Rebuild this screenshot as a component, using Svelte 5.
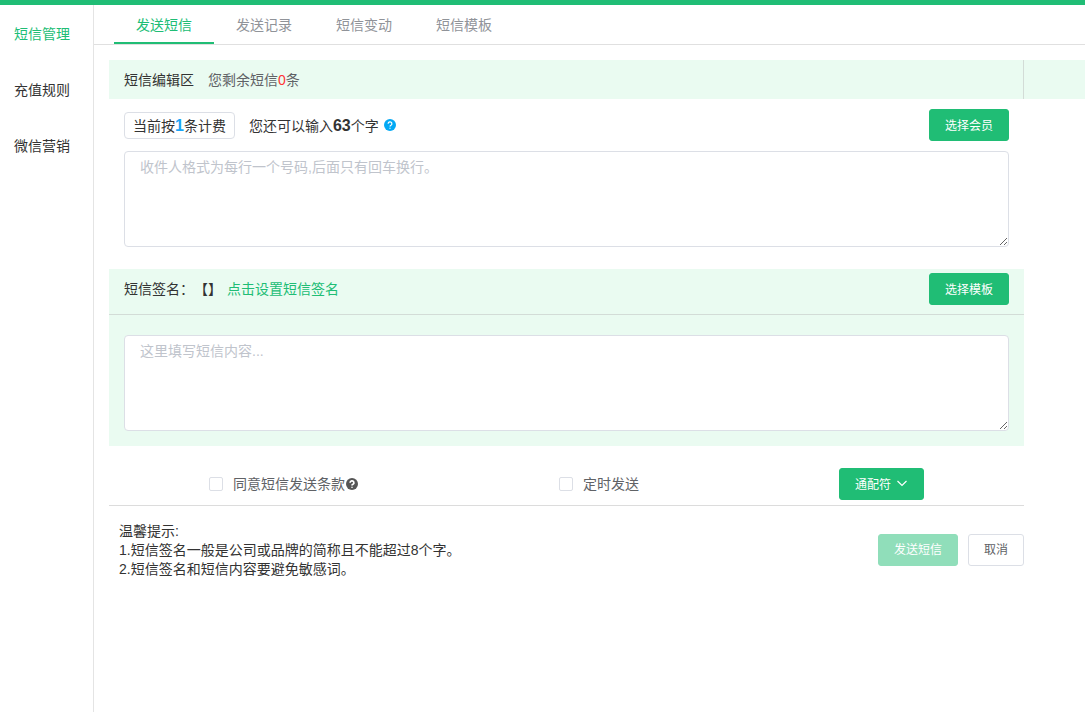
<script>
	const menu = ['短信管理', '充值规则', '微信营销'];
	const tabs = ['发送短信', '发送记录', '短信变动', '短信模板'];

	let activeMenu = 0;
	let activeTab = 0;
	let receivers = '';
	let content = '';
	let agree = false;
	let timed = false;

	function reset() {
		receivers = '';
		content = '';
		agree = false;
		timed = false;
	}
</script>

<div class="page">
	<nav class="sidebar">
		{#each menu as item, i}
			<a href="#menu-{i}" class:active={i === activeMenu} on:click|preventDefault={() => (activeMenu = i)}>{item}</a>
		{/each}
	</nav>

	<main>
		<div class="tabs" role="tablist">
			{#each tabs as tab, i}
				<button role="tab" aria-selected={i === activeTab} class:active={i === activeTab} on:click={() => (activeTab = i)}>{tab}</button>
			{/each}
		</div>

		<form on:submit|preventDefault>
			<header>
				<div class="title">
					<label for="receivers">短信编辑区</label>
					<span class="remain">您剩余短信<span class="red">0</span>条</span>
				</div>
				<div class="side"></div>
			</header>

			<div class="body">
				<section class="receivers">
					<div class="row">
						<span class="fee">当前按<b>1</b>条计费</span>
						<span>您还可以输入<b>63</b>个字</span>
						<svg class="help blue" viewBox="0 0 14 14">
							<circle cx="7" cy="7" r="7" />
							<path d="M4.8 5.5a2.2 2.2 0 1 1 3.3 1.9C7.3 7.8 7 8 7 8.8M7 10.2v1.2" />
						</svg>
						<button type="button" class="btn primary right">选择会员</button>
					</div>
					<textarea id="receivers" bind:value={receivers} placeholder="收件人格式为每行一个号码,后面只有回车换行。"></textarea>
				</section>

				<section class="message">
					<div class="sign">
						<label for="content">短信签名：【】</label>
						<a href="#sign">点击设置短信签名</a>
						<button type="button" class="btn primary right">选择模板</button>
					</div>
					<div class="content">
						<textarea id="content" bind:value={content} placeholder="这里填写短信内容..."></textarea>
					</div>
				</section>

				<div class="options">
					<div class="check">
						<input type="checkbox" id="agree" bind:checked={agree} />
						<label for="agree">同意短信发送条款</label>
						<svg class="help dark" viewBox="0 0 14 14">
							<circle cx="7" cy="7" r="7" />
							<path d="M4.8 5.5a2.2 2.2 0 1 1 3.3 1.9C7.3 7.8 7 8 7 8.8M7 10.2v1.2" />
						</svg>
					</div>
					<div class="check">
						<input type="checkbox" id="timed" bind:checked={timed} />
						<label for="timed">定时发送</label>
					</div>
					<button type="button" class="btn primary">
						通配符
						<svg class="arrow" viewBox="0 0 12 12"><path d="M1.5 4 6 8.5 10.5 4" /></svg>
					</button>
				</div>

				<footer>
					<div class="tips">
						<p>温馨提示:</p>
						<p>1.短信签名一般是公司或品牌的简称且不能超过8个字。</p>
						<p>2.短信签名和短信内容要避免敏感词。</p>
					</div>
					<button class="btn primary" disabled={!agree}>发送短信</button>
					<button type="button" class="btn" on:click={reset}>取消</button>
				</footer>
			</div>
		</form>
	</main>
</div>

<style>
	:global(body) {
		background: #fff;
	}

	.page {
		display: flex;
		box-sizing: border-box;
		min-height: 100vh;
		border-top: 5px solid #20bd75;
		font: 14px/20px "Liberation Sans", Arial, "Noto Sans CJK SC", sans-serif;
		text-spacing-trim: space-all;
		color: #333;
	}

	a {
		color: #20bd75;
		text-decoration: none;
	}

	button,
	textarea {
		font-family: inherit;
	}

	.sidebar {
		flex: none;
		width: 93px;
		padding-top: 1px;
		border-right: 1px solid #e4e4e4;
	}

	.sidebar a {
		display: block;
		padding-left: 14px;
		line-height: 56px;
		color: #333;
	}

	.sidebar a.active {
		color: #20bd75;
	}

	main {
		flex: 1;
		min-width: 0;
	}

	.tabs {
		display: flex;
		padding-left: 20px;
		border-bottom: 1px solid #e0e0e0;
	}

	.tabs button {
		width: 100px;
		height: 39px;
		padding: 0;
		border: 0;
		border-bottom: 2px solid transparent;
		background: none;
		font-size: 14px;
		color: #909399;
		cursor: pointer;
	}

	.tabs button.active {
		color: #20bd75;
		border-color: #20bd75;
	}

	form {
		padding: 15px 0 0 15px;
	}

	header {
		display: flex;
		background: #eafbf1;
	}

	.title {
		flex: 1;
		display: flex;
		align-items: center;
		gap: 14px;
		height: 39px;
		padding-left: 15px;
		border-right: 1px solid #d3dcd7;
	}

	.side {
		width: 61px;
	}

	.remain {
		color: #606266;
	}

	.red {
		color: #f33;
	}

	.body {
		margin-right: 61px;
	}

	.receivers {
		padding: 10px 15px 22px;
	}

	.row {
		display: flex;
		align-items: center;
		margin-bottom: 10px;
	}

	.row span {
		padding-top: 2px;
	}

	.row b {
		font-size: 16px;
	}

	.row .fee {
		padding: 1px 8px 0;
		margin-right: 14px;
		border: 1px solid #dcdfe6;
		border-radius: 4px;
		line-height: 24px;
	}

	.fee b {
		color: #1ba4f5;
	}

	.right {
		margin-left: auto;
	}

	.help {
		width: 12px;
		height: 12px;
	}

	.help path {
		fill: none;
		stroke: #fff;
		stroke-width: 1.4;
	}

	.blue {
		margin-left: 5px;
		fill: #03a9f4;
	}

	.dark {
		margin-left: 1px;
		fill: #555;
	}

	.dark path {
		stroke-width: 2;
	}

	.btn {
		display: flex;
		align-items: center;
		height: 32px;
		padding: 0 15px 2px;
		border: 1px solid #dcdfe6;
		border-radius: 3px;
		background: #fff;
		font-size: 12px;
		color: #606266;
		cursor: pointer;
	}

	.btn.primary {
		border-color: #20bd75;
		background: #20bd75;
		color: #fff;
	}

	.btn.primary:disabled {
		border-color: #90deba;
		background: #90deba;
		cursor: not-allowed;
	}

	textarea {
		display: block;
		box-sizing: border-box;
		width: 100%;
		height: 96px;
		padding: 5px 15px;
		border: 1px solid #dcdfe6;
		border-radius: 4px;
		background: #fff;
		font-size: 14px;
		line-height: 21px;
		color: #606266;
		resize: vertical;
	}

	textarea::placeholder {
		color: #c0c4cc;
	}

	.message {
		background: #eafbf1;
	}

	.sign {
		display: flex;
		align-items: center;
		gap: 5px;
		padding: 4px 15px 9px;
		border-bottom: 1px solid #d3dcd7;
	}

	.content {
		padding: 20px 15px 15px;
	}

	.options {
		display: grid;
		grid-template-columns: 350fr 280fr auto;
		align-items: center;
		padding: 22px 100px 5px;
		border-bottom: 1px solid #dcdcdc;
	}

	.check {
		display: flex;
		align-items: center;
		color: #606266;
	}

	.check input {
		appearance: none;
		width: 14px;
		height: 14px;
		margin: 0 10px 0 0;
		border: 1px solid #dcdfe6;
		border-radius: 2px;
		background: #fff;
	}

	.check input:checked {
		border-color: #20bd75;
		background: #20bd75;
	}

	.arrow {
		width: 12px;
		height: 12px;
		margin-left: 5px;
		fill: none;
		stroke: #fff;
		stroke-width: 1.2;
	}

	footer {
		display: flex;
		align-items: center;
		gap: 10px;
		padding: 14px 0 14px 10px;
	}

	.tips {
		flex: 1;
		padding-top: 2px;
		line-height: 19px;
	}

	.tips p {
		margin: 0;
	}
</style>
